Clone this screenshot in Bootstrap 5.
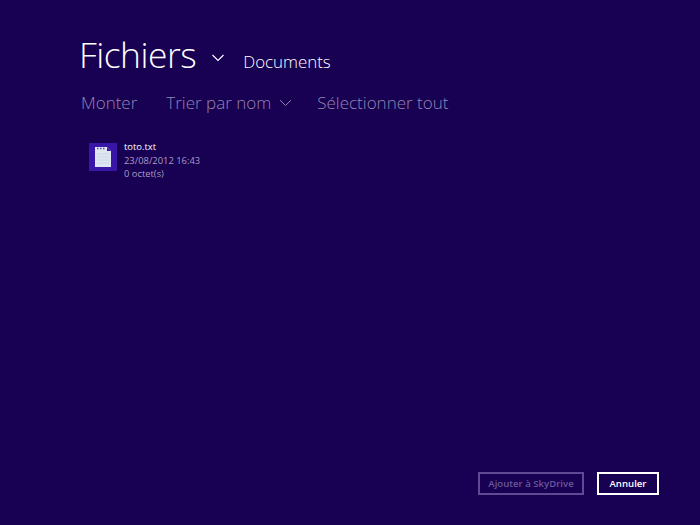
<!DOCTYPE html>
<html lang="fr">
<head>
<meta charset="utf-8">
<title>Fichiers</title>
<link href="https://cdn.jsdelivr.net/npm/bootstrap@5.3.0/dist/css/bootstrap.min.css" rel="stylesheet">
<style>
html, body { height: 100%; }
body { background: #180052; color: #fff; font-family: "Open Sans", "Noto Sans", sans-serif; overflow: hidden; }
.picker { height: 525px; padding: 31px 41px 30px 79px; }
.title-row { height: 46px; }
.title-main { font-size: 35.4px; font-weight: 300; line-height: 46px; letter-spacing: -.5px; margin: 0 15px 0 0; color: #fff; }
.title-chev { transform: translateY(4px); }
.title-sub { font-size: 16.9px; font-weight: 300; line-height: 22px; margin: 0 0 0 18px; transform: translateY(8px); color: #fff; }
.cmd-row { margin-top: 14px; margin-left: 2px; height: 24px; color: #9286b3; font-size: 17px; font-weight: 300; line-height: 24px; }
.cmd-item { color: #9286b3; display: flex; align-items: center; gap: 8px; white-space: nowrap; margin-right: 29px; }
.cmd-sort { margin-right: 25px; }
.file-row { margin-top: 28px; margin-left: 10px; gap: 7px; }
.file-thumb { width: 28px; height: 28px; background: #3a16a8; }
.file-meta { font-size: 9.4px; line-height: 13.5px; margin-top: -3px; color: #a89dc4; }
.file-name { color: #fff; }
.btn-line { gap: 13px; }
.act-btn { font-size: 9.6px; font-weight: 600; height: 23px; line-height: 19px; padding: 0; border-radius: 0; background: transparent; }
.act-off, .act-off:disabled { width: 106px; color: #6a5a9a; border: 2px solid #5f4b93; opacity: 1; }
.act-on { width: 62px; color: #fff; border: 2px solid #fff; }
</style>
</head>
<body>
<main class="picker d-flex flex-column">
  <header class="title-row d-flex align-items-center">
    <h1 class="title-main">Fichiers</h1>
    <svg class="title-chev" width="14" height="8" viewBox="0 0 14 8" aria-hidden="true"><path d="M1.5 1 7 6.5 12.5 1" fill="none" stroke="#fff" stroke-width="1.1"/></svg>
    <p class="title-sub">Documents</p>
  </header>
  <nav class="cmd-row d-flex">
    <span class="cmd-item">Monter</span>
    <span class="cmd-item cmd-sort">Trier par nom
      <svg width="13" height="8" viewBox="0 0 13 8" aria-hidden="true"><path d="M1 1.2 6.5 6.5 12 1.2" fill="none" stroke="#9286b3" stroke-width="1"/></svg></span>
    <span class="cmd-item">Sélectionner tout</span>
  </nav>
  <section class="file-row d-flex align-items-start">
    <div class="file-thumb d-flex align-items-center justify-content-center">
      <svg width="16" height="20" viewBox="0 0 16 20" aria-hidden="true">
        <path d="M0 0H12L16 4V20H0Z" fill="#dfe6f3"/>
        <path d="M2 1.5h1.5M5 1.5h1.5M8 1.5h1.5" stroke="#5a4a9a" stroke-width="1.5"/>
        <path d="M2 7h12M2 10h12M2 13h12M2 16h12" stroke="#cdd6e8" stroke-width="1"/>
        <path d="M12 0V4H16Z" fill="#3a16a8"/>
      </svg>
    </div>
    <div class="file-meta">
      <div class="file-name">toto.txt</div>
      <div>23/08/2012 16:43</div>
      <div>0 octet(s)</div>
    </div>
  </section>
  <footer class="btn-line d-flex justify-content-end mt-auto">
    <button type="button" class="btn act-btn act-off" disabled>Ajouter à SkyDrive</button>
    <button type="button" class="btn act-btn act-on">Annuler</button>
  </footer>
</main>
<script src="https://cdn.jsdelivr.net/npm/bootstrap@5.3.0/dist/js/bootstrap.bundle.min.js"></script>
</body>
</html>
